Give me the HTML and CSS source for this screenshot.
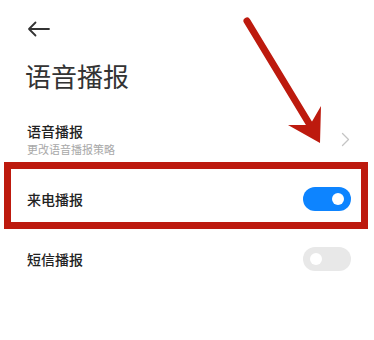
FILE: index.html
```html
<!DOCTYPE html>
<html lang="zh">
<head>
<meta charset="utf-8">
<link rel="stylesheet" href="styles.css">
</head>
<body>
<div class="page">
  <header class="header">
    <svg class="back" width="24" height="16" viewBox="0 0 24 16">
      <path d="M2 8 H22 M8.5 1.5 L2 8 L8.5 14.5" fill="none" stroke="#333" stroke-width="1.8" stroke-linecap="round" stroke-linejoin="round"/>
    </svg>
  </header>
  <h1 class="title">语音播报</h1>
  <div class="list">
    <div class="row">
      <div class="texts">
        <div class="row-title">语音播报</div>
        <div class="row-sub">更改语音播报策略</div>
      </div>
      <svg class="chev" width="9" height="15" viewBox="0 0 9 15">
        <path d="M1.5 1.5 L7.5 7.5 L1.5 13.5" fill="none" stroke="#c4c4c4" stroke-width="1.3" stroke-linecap="round" stroke-linejoin="round"/>
      </svg>
    </div>
    <div class="row">
      <div class="row-title">来电播报</div>
      <div class="toggle on"><span class="knob"></span></div>
    </div>
    <div class="row">
      <div class="row-title">短信播报</div>
      <div class="toggle off"><span class="knob"></span></div>
    </div>
  </div>

  <div class="mark-box"></div>
  <svg class="mark-arrow" width="374" height="340" viewBox="0 0 374 340">
    <line x1="247" y1="21" x2="313" y2="130" stroke="#bd1a0e" stroke-width="7" stroke-linecap="round"/>
    <polygon points="320,143 288,125 310,125 321,106" fill="#bd1a0e"/>
  </svg>
</div>
</body>
</html>
```

FILE: styles.css
```css
* { box-sizing: border-box; }
html, body {
  margin: 0;
  padding: 0;
  background: #ffffff;
}
body {
  font-family: "Noto Sans CJK SC", "Noto Sans", sans-serif;
  color: #222;
}
.page {
  position: relative;
  width: 374px;
  height: 340px;
  overflow: hidden;
}
.header {
  height: 36px;
  padding: 21px 0 0 27px;
}
.back { display: block; }
.title {
  margin: 27px 0 0 25px;
  font-size: 26px;
  line-height: 26px;
  font-weight: 400;
  color: #333;
  letter-spacing: 0;
}
.list {
  margin-top: 20px;
}
.row {
  height: 60px;
  padding: 0 23px 0 27px;
  display: flex;
  align-items: center;
  justify-content: space-between;
}
.texts {
  display: flex;
  flex-direction: column;
  gap: 2px;
}
.row-title {
  font-size: 14px;
  line-height: 18px;
  font-weight: 500;
  color: #222;
}
.row-sub {
  font-size: 11px;
  line-height: 14px;
  color: #a8a8a8;
}
.chev {
  display: block;
  margin-right: 1px;
}
.toggle {
  position: relative;
  width: 48px;
  height: 24px;
  border-radius: 12px;
}
.toggle.on { background: #0d84ff; }
.toggle.off { background: #e8e8e8; }
.knob {
  position: absolute;
  top: 6px;
  width: 12px;
  height: 12px;
  border-radius: 50%;
  background: #fff;
}
.toggle.on .knob { right: 7px; }
.toggle.off .knob { left: 7px; }

.mark-box {
  position: absolute;
  left: 4px;
  top: 162px;
  width: 364px;
  height: 67px;
  border: 7px solid #bd1a0e;
}
.mark-arrow {
  position: absolute;
  left: 0;
  top: 0;
  pointer-events: none;
}
```
